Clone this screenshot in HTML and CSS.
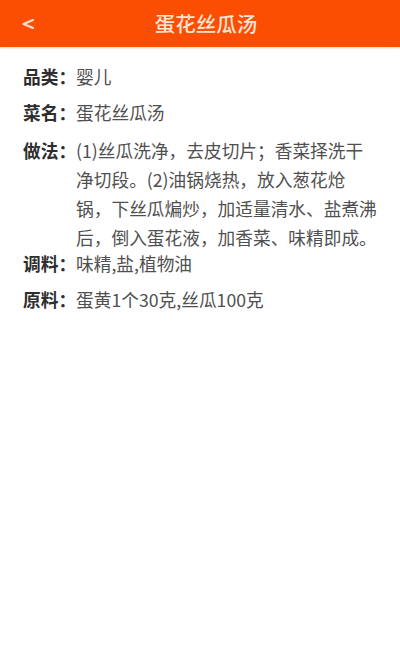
FILE: index.html
```html
<!DOCTYPE html>
<html lang="zh-CN">
<head>
<meta charset="utf-8">
<title>蛋花丝瓜汤</title>
<link rel="stylesheet" href="styles.css">
</head>
<body>
<header class="topbar">
  <div class="back">
    <svg class="back-icon" width="12" height="10" viewBox="0 0 12 10"><polyline points="11,1 1.5,5 11,9" fill="none" stroke="#f7e3d2" stroke-width="2" stroke-linecap="round" stroke-linejoin="round"/></svg>
  </div>
  <h1 class="title">蛋花丝瓜汤</h1>
</header>
<main class="content">
  <div class="row">
    <span class="label">品类：</span>
    <span class="value">婴儿</span>
  </div>
  <div class="row">
    <span class="label">菜名：</span>
    <span class="value">蛋花丝瓜汤</span>
  </div>
  <div class="row row-method">
    <span class="label">做法：</span>
    <span class="value">
      <span class="line">(1)丝瓜洗净，去皮切片；香菜择洗干</span>
      <span class="line">净切段。(2)油锅烧热，放入葱花炝</span>
      <span class="line">锅，下丝瓜煸炒，加适量清水、盐煮沸</span>
      <span class="line">后，倒入蛋花液，加香菜、味精即成。</span>
    </span>
  </div>
  <div class="row">
    <span class="label">调料：</span>
    <span class="value">味精,盐,植物油</span>
  </div>
  <div class="row">
    <span class="label">原料：</span>
    <span class="value">蛋黄1个30克,丝瓜100克</span>
  </div>
</main>
</body>
</html>
```
FILE: styles.css
```css
html, body {
  margin: 0;
  padding: 0;
  background: #ffffff;
}
body {
  font-family: "Noto Sans CJK SC", "Noto Sans", sans-serif;
  width: 400px;
  height: 666px;
  overflow: hidden;
}
.topbar {
  height: 47px;
  background: #fc4e02;
  display: flex;
  align-items: center;
  box-shadow: 0 1px 2px rgba(255, 130, 60, 0.35);
}
.back {
  width: 56px;
  padding-left: 22px;
  box-sizing: border-box;
  display: flex;
  align-items: center;
  height: 100%;
}
.back-icon {
  display: block;
}
.title {
  flex: 1;
  margin: 0;
  padding-right: 44px;
  text-align: center;
  font-size: 20.5px;
  font-weight: 500;
  color: #f7e4d4;
  line-height: 47px;
}
.content {
  padding: 15px 0 0 23px;
  display: flex;
  flex-direction: column;
  gap: 7px;
}
.row {
  display: flex;
  align-items: flex-start;
  font-size: 17.7px;
  line-height: 29px;
}
.row-method {
  margin-top: 2px;
  margin-bottom: -10px;
}
.label {
  flex: none;
  font-weight: 700;
  color: #2e2e2e;
}
.value {
  color: #505050;
  white-space: nowrap;
}
.line {
  display: block;
}
```
